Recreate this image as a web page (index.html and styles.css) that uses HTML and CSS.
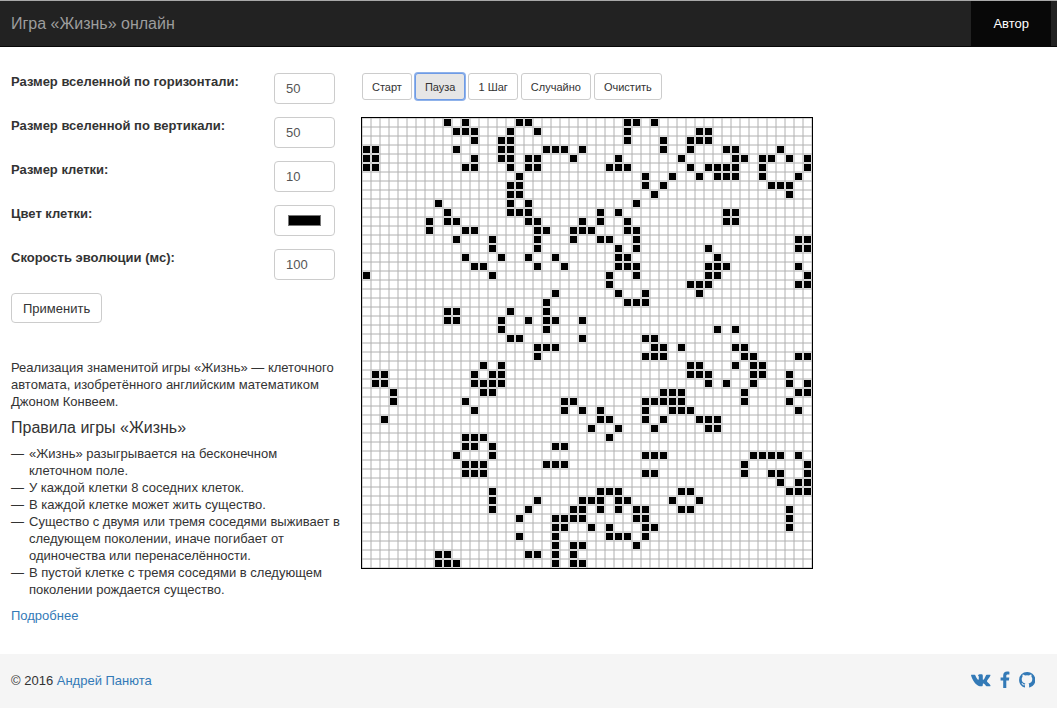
FILE: index.html
```
<!DOCTYPE html>
<html lang="ru">
<head>
<meta charset="utf-8">
<title>Игра «Жизнь» онлайн</title>
<link rel="stylesheet" href="styles.css">
</head>
<body>
<header class="navbar">
  <a class="brand" href="#">Игра «Жизнь» онлайн</a>
  <nav class="nav"><a class="nav-link" href="#">Автор</a></nav>
</header>
<main class="layout">
  <section class="sidebar">
    <form class="settings">
      <div class="field"><label for="w">Размер вселенной по горизонтали:</label><input class="control" id="w" type="text" value="50"></div>
      <div class="field"><label for="h">Размер вселенной по вертикали:</label><input class="control" id="h" type="text" value="50"></div>
      <div class="field"><label for="size">Размер клетки:</label><input class="control" id="size" type="text" value="10"></div>
      <div class="field"><label for="color">Цвет клетки:</label><input class="control control-color" id="color" type="color" value="#000000"></div>
      <div class="field"><label for="speed">Скорость эволюции (мс):</label><input class="control" id="speed" type="text" value="100"></div>
      <button class="btn btn-apply" type="button">Применить</button>
    </form>
    <p class="intro">Реализация знаменитой игры «Жизнь» — клеточного автомата, изобретённого английским математиком Джоном Конвеем.</p>
    <h2 class="title">Правила игры «Жизнь»</h2>
    <ul class="rules">
      <li>«Жизнь» разыгрывается на бесконечном клеточном поле.</li>
      <li>У каждой клетки 8 соседних клеток.</li>
      <li>В каждой клетке может жить существо.</li>
      <li>Существо с двумя или тремя соседями выживает в следующем поколении, иначе погибает от одиночества или перенаселённости.</li>
      <li>В пустой клетке с тремя соседями в следующем поколении рождается существо.</li>
    </ul>
    <a class="link" href="#">Подробнее</a>
  </section>
  <section class="game">
    <div class="toolbar">
      <button class="btn btn-small" type="button">Старт</button>
      <button class="btn btn-small is-active" type="button">Пауза</button>
      <button class="btn btn-small" type="button">1 Шаг</button>
      <button class="btn btn-small" type="button">Случайно</button>
      <button class="btn btn-small" type="button">Очистить</button>
    </div>
    <canvas class="universe" id="universe" width="450" height="450"></canvas>
  </section>
</main>
<footer class="footer">
  <span>© 2016 <a class="link" href="#">Андрей Панюта</a></span>
  <div class="social">
    <a href="#" aria-label="ВКонтакте"><svg width="20" height="18" viewBox="0 0 20 18"><path fill="currentColor" d="M0.4 3.8h3.2c.4 0 .6.2.8.7 1 2.4 2.200 4.300 2.900 4.300.4 0 .5-.4.5-1.200V6c0-1.100-.3-1.400-.9-1.600.3-.7 1.300-1.100 2.700-1.100 1.800 0 2.200.3 2.200 1.600v3c0 .6.1.9.4.9.7 0 1.800-2.100 2.700-4.300.2-.5.4-.7.9-.7h3.100c.6 0 .6.500.4 1-.5 1.400-2.500 3.900-3.100 4.700-.4.500-.4.700 0 1.200.6.700 2.500 2.300 3.200 3.500.3.600 0 1-.7 1h-3.100c-1 0-1.900-2.600-3.200-2.600-.5 0-.6.4-.6 1.400 0 .9-.3 1.200-1.500 1.200-4.300 0-7.600-3.500-10.100-10.300-.2-.6-.1-1.100.2-1.100z"/></svg></a>
    <a href="#" aria-label="Facebook"><svg width="10" height="18" viewBox="0 0 10 18"><path fill="currentColor" d="M9.400.7v2.700H7.800c-1.200 0-1.500.6-1.500 1.400v1.800h3l-.4 2.900H6.300V17H3.200V9.500H.6V6.600h2.600V4.400C3.200 1.900 4.800.5 7.100.5c1.100 0 2 .1 2.300.2z"/></svg></a>
    <a href="#" aria-label="GitHub"><svg width="16" height="18" viewBox="0 0 16 18"><path fill="currentColor" d="M8 1A7.900 7.900 0 0 0 .1 9c0 3.500 2.200 6.500 5.400 7.500.4.100.5-.2.500-.4v-1.900c-1.700.4-2.500-.2-2.900-1.100-.2-.5-.5-.8-.8-1 .9-.3 1.500.3 1.900.9.500.6 1.100.7 1.800.4.100-.4.200-.6.400-.8C4.300 12.300 2.700 11.200 2.700 8.100c0-.9.300-1.700.9-2.300-.2-.7-.2-1.500.1-2.300.8 0 1.600.5 2.300.9a8 8 0 0 1 4 0c.7-.4 1.500-.9 2.300-.9.300.8.300 1.600.1 2.300.6.600.9 1.400.9 2.300 0 3.100-1.700 4.200-3.800 4.500.4.300.6.800.6 1.500v2c0 .2.100.5.500.4A7.900 7.900 0 0 0 8 1z"/></svg></a>
  </div>
</footer>
<script src="life.js"></script>
</body>
</html>
```
FILE: styles.css
```
* { box-sizing: border-box; }
body {
  display: flex;
  flex-direction: column;
  min-height: 100vh;
  margin: 0;
  border-top: 1px solid #a9a9a9;
  background: #fff;
  color: #333;
  font: 13px/17px "Liberation Sans", Arial, sans-serif;
}
a { text-decoration: none; }
.link { color: #337ab7; }
.navbar {
  display: flex;
  justify-content: space-between;
  align-items: center;
  height: 46px;
  padding: 0 6px 0 11px;
  border-bottom: 1px solid #080808;
  background: #222;
}
.brand { color: #9d9d9d; font-size: 16px; }
.nav { display: flex; height: 100%; }
.nav-link {
  display: flex;
  align-items: center;
  padding: 0 22px;
  background: #080808;
  color: #fff;
}
.layout {
  display: grid;
  grid-template-columns: 324px 1fr;
  gap: 26px;
  padding: 26px 11px 29px;
}
.settings { margin-bottom: 36px; }
.field {
  display: flex;
  justify-content: space-between;
  align-items: flex-start;
  margin-bottom: 13px;
}
.field label { font-weight: bold; }
.control {
  width: 61px;
  height: 31px;
  padding: 0 11px;
  border: 1px solid #ccc;
  border-radius: 4px;
  background: #fff;
  color: #555;
  font: inherit;
}
.control-color { padding: 9px 13px; }
.control-color::-webkit-color-swatch-wrapper { padding: 0; }
.control-color::-webkit-color-swatch { border: 1px solid #777; border-radius: 0; }
.btn {
  border: 1px solid #ccc;
  border-radius: 4px;
  background: #fff;
  color: #333;
  font: inherit;
}
.btn-apply { height: 30px; padding: 0 11px; }
.intro { margin: 0 0 9px; }
.title { margin: 0 0 8px; font-size: 16px; font-weight: normal; line-height: 18px; }
.rules { margin: 0 -8px 9px 0; padding: 0; list-style: none; }
.rules li { display: flex; }
.rules li::before { content: "—"; flex: 0 0 18px; }
.toolbar { display: flex; gap: 3px; padding-left: 1px; margin-bottom: 17px; }
.btn-small {
  height: 27px;
  padding: 2px 9px 0;
  border-radius: 3px;
  font-size: 11px;
}
.btn-small.is-active {
  border-color: #6e9be6;
  background: #e6e6e6;
  box-shadow: 0 0 0 1px #8fb2ea;
}
.universe { display: block; border: 1px solid #000; box-sizing: content-box; }
.footer {
  display: flex;
  justify-content: space-between;
  align-items: center;
  height: 54px;
  margin-top: auto;
  padding: 0 22px 2px 11px;
  background: #f5f5f5;
}
.social { display: flex; gap: 9px; color: #337ab7; }
.social a { display: flex; color: inherit; }
```
FILE: life.js
```
// Live columns for each row of the universe.
const rows = [
  [9,11,17,18,29,30,32],
  [10,11,12,16,19,29,37,38],
  [12,15,16,29,33,36,37,38],
  [0,1,10,15,16,20,21,22,24,33,36,40,41,46],
  [0,1,12,15,16,18,19,23,28,35,41,42,44,45,47,49],
  [0,1,11,12,16,18,19,27,28,29,36,38,39,40,41,44,49],
  [17,31,34,37,39,40,41,44,48],
  [16,17,31,33,45,46,47],
  [16,17,32,47],
  [8,16,18,30],
  [9,16,17,18,26,28,40,41],
  [7,9,10,18,19,24,26,29,40,41],
  [7,11,12,19,20,23,24,25,29,30],
  [10,14,19,23,26,27,30,48,49],
  [14,19,28,30,38,48,49],
  [11,15,18,21,28,29,39],
  [12,13,19,22,28,29,30,38,39,40,48],
  [0,14,27,30,38,39,49],
  [27,36,37,38,48,49],
  [21,28,31,37],
  [20,29,30,31],
  [9,10,16,20],
  [9,10,15,18,20,21,24],
  [15,20,39,41],
  [16,17,24,31,32],
  [19,20,21,32,33,35,41,42],
  [19,31,32,33,42,43,48,49],
  [13,15,36,37,41,43,44],
  [1,2,12,14,15,36,37,38,43,44,47],
  [1,2,12,13,14,15,38,40,43,47,49],
  [3,13,14,33,34,35,42,48,49],
  [3,11,22,23,31,32,33,34,35,42,47],
  [12,22,24,26,31,34,35,36,48],
  [2,26,27,31,33,37,38,39],
  [25,28,32,38,39],
  [11,12,13,27],
  [11,12,14,21,22],
  [10,14,31,32,33,43,44,45,46,48],
  [11,12,13,20,21,22,42,49],
  [11,12,13,31,32,42,45,46,49],
  [46,48,49],
  [14,26,27,28,35,36,47,48,49],
  [14,19,24,25,26,28,29,34,37],
  [14,18,23,24,26,28,30,31,35,36,47],
  [17,21,22,23,24,30,31,47],
  [21,22,25,27,31,32,47],
  [17,21,27,28,29,31],
  [21,23,24,30],
  [8,9,18,19,21,23],
  [8,9,10,21,23,24]
];
const step = 9;
const canvas = document.getElementById("universe");
const ctx = canvas.getContext("2d");
ctx.strokeStyle = "#b0b0b0";
ctx.beginPath();
for (let p = 0; p <= canvas.width; p += step) {
  ctx.moveTo(p, 0);
  ctx.lineTo(p, canvas.height);
  ctx.moveTo(0, p);
  ctx.lineTo(canvas.width, p);
}
ctx.stroke();
ctx.fillStyle = document.getElementById("color").value;
rows.forEach((row, y) => row.forEach(x => ctx.fillRect(x * step + 1, y * step + 1, step - 2, step - 2)));
```
